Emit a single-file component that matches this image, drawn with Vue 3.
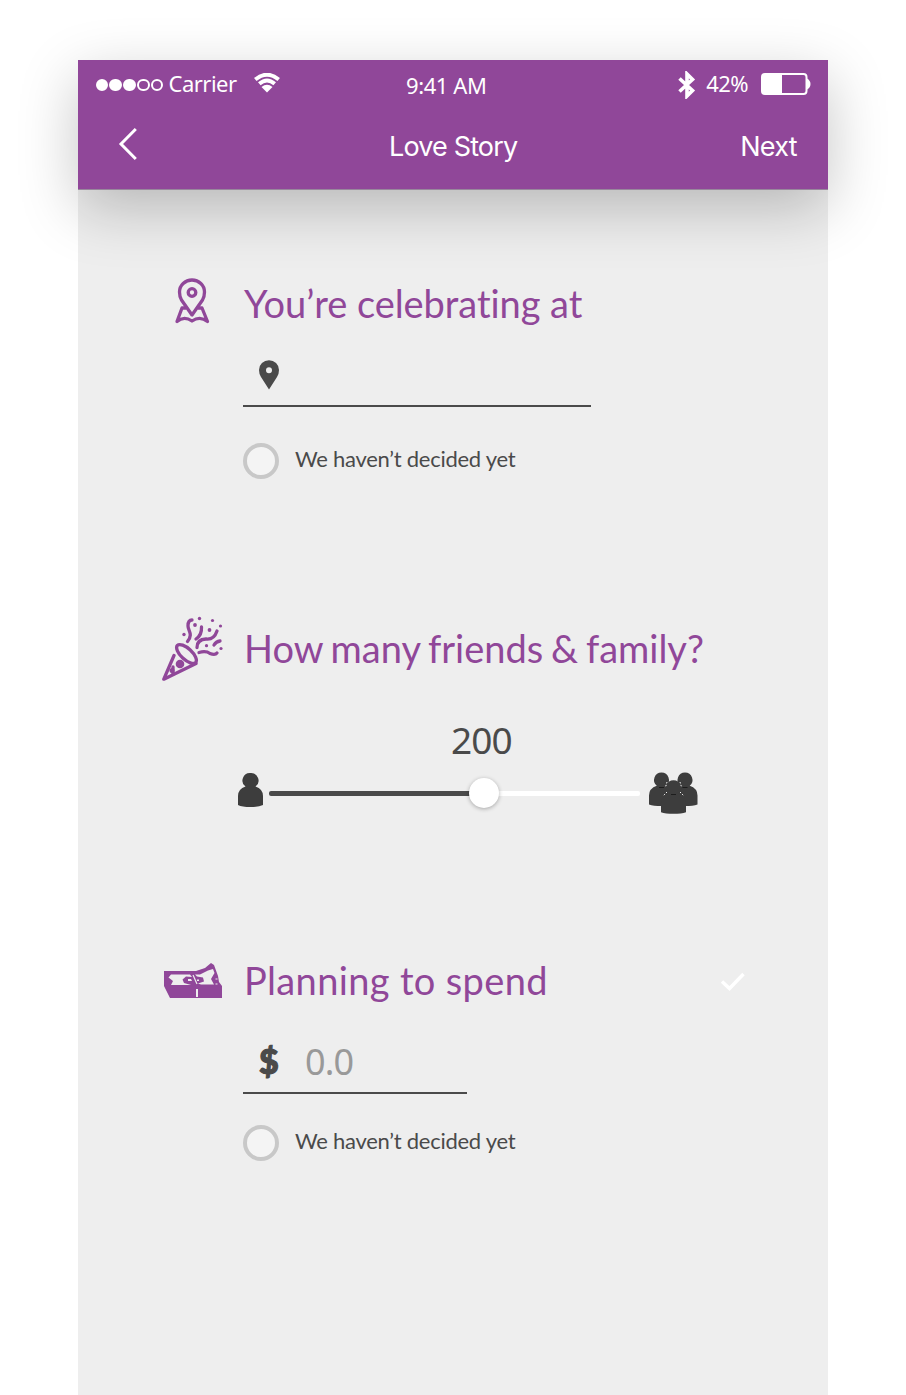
<script setup>
import { ref } from 'vue'

const guests = ref(200)
const progress = ref(58)
const signal = [true, true, true, false, false]
</script>

<template>
  <main class="phone">
    <header class="top">
      <div class="status">
        <div class="side left">
          <span class="dots"><i v-for="(on, n) in signal" :key="n" :class="{ on }"></i></span>
          <span class="carrier">Carrier</span>
          <svg class="wifi" width="26" height="20" viewBox="0 0 26 20">
            <path d="M1.300 6.500Q13-3 24.700 6.500M5.300 10.800Q13 4.300 20.700 10.800" fill="none" stroke="#fff" stroke-width="4" />
            <path d="M7.500 14Q13 9.500 18.500 14L13 19.500Z" fill="#fff" />
          </svg>
        </div>
        <span class="clock">9:41 AM</span>
        <div class="side right">
          <svg class="bluetooth" width="18" height="28" viewBox="0 0 18 28">
            <path d="M1.500 7.500L14.500 19.500 9 25V3L14.500 8.500 1.500 20.500" fill="none" stroke="#fff" stroke-width="3.600" />
          </svg>
          <span class="percent">42%</span>
          <svg class="battery" width="50" height="22" viewBox="0 0 50 22">
            <rect x="1" y="1" width="44.500" height="20" rx="3" fill="none" stroke="#fff" stroke-width="2" />
            <path d="M1 2h20v18H1zM46 5.500q3.500 2 3.500 5.500t-3.500 5.500z" fill="#fff" />
          </svg>
        </div>
      </div>
      <nav class="nav">
        <svg class="back" width="20" height="34" viewBox="0 0 20 34">
          <path d="M17.800 2L3 17 17.800 32" fill="none" stroke="#fff" stroke-width="3" />
        </svg>
        <h1>Love Story</h1>
        <span class="next">Next</span>
      </nav>
    </header>

    <section class="venue">
      <div class="heading">
        <svg class="icon" width="62" height="68" viewBox="162 270 62 68">
          <g fill="none" stroke="#904799" stroke-width="3.300" stroke-linejoin="round">
            <path d="M192 315L181.500 300Q179.500 296.500 179.500 292A12.500 12 0 0 1 204.500 292Q204.500 296.500 202.500 300Z" />
            <circle cx="192" cy="292.500" r="3.800" />
            <path d="M186 308H182L177 321.500Q184 315.500 192 321Q200 315.500 207.500 321.500L202 308H198" />
          </g>
        </svg>
        <h2 class="t1">You’re celebrating at</h2>
      </div>
      <div class="field wide">
        <svg width="20" height="30" viewBox="0 0 20 30">
          <path fill-rule="evenodd" fill="#4a4a4a" d="M10 29.500L2 17Q0 14 0 10A10 9.800 0 0 1 20 10Q20 14 18 17ZM10 7.200a3 3 0 1 0 0 6a3 3 0 0 0 0-6" />
        </svg>
      </div>
      <label class="choice"><i class="radio"></i><span>We haven’t decided yet</span></label>
    </section>

    <section class="people">
      <div class="heading">
        <svg class="icon" width="62" height="68" viewBox="162 615 62 68">
          <g fill="none" stroke="#904799" stroke-width="3.300" stroke-linecap="round">
            <path d="M174 655.500L163.800 679.200 196 663.500" stroke-linejoin="round" />
            <ellipse cx="186.500" cy="654" rx="12.500" ry="5.500" transform="rotate(43 186.500 654)" />
            <path d="M173 667v7M187.500 641.500C193.500 634 188 631 188 626q0-6 4-6M196 639q6-4 5.500-12M197 647.500q0-8 9-8.500 8 1 11-8M199 652.500q7-2 11 1 5 2 7-.5M214 645q2-3.500 6-4" />
          </g>
          <g fill="#904799">
            <circle cx="180" cy="664" r="4.300" /><circle cx="172" cy="670.500" r="2.500" />
            <circle cx="199.500" cy="618.500" r="1.700" /><circle cx="195" cy="625" r="1.900" />
            <circle cx="184" cy="634.500" r="1.700" /><circle cx="212.500" cy="620.500" r="1.600" />
            <circle cx="209.500" cy="630" r="1.900" /><circle cx="220.500" cy="626" r="1.600" />
            <circle cx="206.500" cy="645.700" r="1.600" /><circle cx="221" cy="648.500" r="1.600" />
          </g>
        </svg>
        <h2 class="t2">How many friends &amp; family?</h2>
      </div>
      <div class="count">{{ guests }}</div>
      <div class="slider">
        <svg width="26" height="46" viewBox="237 770 26 46">
          <path fill="#3d3d3d" d="M250.500 773a7.500 7.500 0 0 1 5 13.500Q263 789 263 796v9q-4 2-12.500 2T238 805v-9q0-7 7.500-9.500a7.500 7.500 0 0 1 5-13.500" />
        </svg>
        <div class="track">
          <div class="fill" :style="{ width: progress + '%' }"></div>
          <div class="thumb" :style="{ left: progress + '%' }"></div>
        </div>
        <svg width="50" height="46" viewBox="649 770 50 46">
          <defs>
            <path id="person" d="M0-21a7.500 7.500 0 0 1 4.700 13.300Q12.500-5 12.500 2v9Q8 12.500 0 12.500T-12.500 11V2q0-7 7.800-9.700A7.500 7.500 0 0 1 0-21" />
          </defs>
          <g fill="#3d3d3d">
            <use href="#person" x="661.500" y="793.500" />
            <use href="#person" x="685" y="793.500" />
            <use href="#person" x="673.500" y="801.300" />
          </g>
          <path d="M667 782l-1.500 5M680 782l1.500 5M667 792l-4 4M680 792l4 4" stroke="#eee" stroke-dasharray="1.500 1.500" />
          <path d="M659 787.500h5M682.500 787.500h5M671 794.500h5" stroke="#1d1d1d" />
        </svg>
      </div>
    </section>

    <section class="budget">
      <div class="heading">
        <svg class="icon" width="62" height="68" viewBox="162 947 62 68">
          <path fill="#904799" d="M164 971H196L205 968 211 963 214 965 218 976 219 982 222 986V998H170L164 986Z" />
          <path fill="#eee" d="M171 974.500H190L192 977 186 976.500 182.500 979.500 184 983 191 985H171L173 981 168.500 977.500ZM195 974.500H200L208 970.500 213 969 214.500 973 211 979 214 984.500H201L198 983.500 204 981.500 203 977.500 197 976.500Z" />
          <path fill="#eee" d="M188 979h3l1 2h-4zM197 979.500h2v1.500h-2zM196 989h2v8h-2z" />
          <path d="M193 975l4 9" stroke="#eee" stroke-width="1.200" />
          <path d="M215.500 979h2M215.500 984h2" stroke="#eee" />
        </svg>
        <h2 class="t3">Planning to spend</h2>
        <svg class="check" width="26" height="20" viewBox="0 0 26 20">
          <path d="M2 10.500L9.500 17.500 23.500 3" fill="none" stroke="#fff" stroke-width="3.400" />
        </svg>
      </div>
      <div class="field narrow">
        <b>$</b><span class="amount">0.0</span>
      </div>
      <label class="choice"><i class="radio"></i><span>We haven’t decided yet</span></label>
    </section>
  </main>
</template>

<style>
body { margin: 0; background: #fff; overflow: hidden; }
</style>

<style scoped>
.phone {
  box-sizing: border-box;
  width: 750px;
  height: 1335px;
  margin: 60px 0 0 78px;
  background: #eee;
  color: #4a4a4a;
  font-family: "Noto Sans", sans-serif;
  font-variant-ligatures: none;
}
.top {
  box-sizing: border-box;
  height: 130px;
  background: #904799;
  border-bottom: 1px solid #98879c;
  box-shadow: 0 18px 60px rgba(0, 0, 0, .23);
  color: #fff;
}
.status { display: grid; grid-template-columns: 311px auto 1fr; height: 50px; align-items: center; padding: 0 17px 0 17px; }
.side { display: flex; align-items: center; height: 50px; }
.right { justify-content: flex-end; }
.dots { display: flex; gap: 1px; margin-left: .5px; }
.dots i { box-sizing: border-box; width: 12.800px; height: 12.800px; border: 2px solid #fff; border-radius: 50%; }
.dots i.on { background: #fff; }
.carrier { margin: -4px 0 0 5px; font-size: 22px; letter-spacing: -.5px; }
.wifi { margin: -4px 0 0 17px; }
.clock { font-size: 22px; letter-spacing: -.4px; }
.bluetooth { margin-top: -1px; }
.percent { margin: -4px 0 0 10px; font-size: 22px; letter-spacing: -.6px; }
.battery { margin: -2px 0 0 13px; }
.nav { display: grid; grid-template-columns: 271px auto 1fr; align-items: center; height: 70px; padding: 0 31px 0 40px; font-family: Inter, sans-serif; font-size: 27px; }
.back { margin: -2px 0 0 0; }
h1 { margin: 2px 0 0; font-size: 27px; font-weight: 400; letter-spacing: -.85px; }
.next { justify-self: end; margin-top: 2px; letter-spacing: -.7px; }
section { box-sizing: border-box; padding-left: 84px; }
.venue { padding-top: 80px; height: 425px; }
.people { height: 332px; }
.heading { display: flex; align-items: center; height: 68px; }
h2 { margin: -3px 0 0 20px; color: #904799; font-family: Lato, sans-serif; font-size: 38px; font-weight: 400; line-height: 68px; white-space: nowrap; }
.t1 { letter-spacing: -.05px; }
.t2 { word-spacing: -1.900px; }
.t3 { letter-spacing: .35px; }
.check { margin-left: 172px; }
.field { box-sizing: border-box; display: flex; align-items: center; height: 59px; margin: 10px 0 0 81px; padding: 0 16px 4px; border-bottom: 2px solid #4a4a4a; }
.wide { width: 348px; }
.narrow { width: 224px; margin-top: 20px; padding-bottom: 2px; }
.field b { width: 20px; margin-top: -3px; font-family: Lato, sans-serif; font-size: 34px; font-weight: 900; line-height: 56px; -webkit-text-stroke: 1.200px #4a4a4a; }
.amount { margin: -2px 0 0 26px; color: #999; font-size: 36px; letter-spacing: -.9px; }
.choice { display: flex; align-items: center; height: 36px; margin: 36px 0 0 81px; font-family: Lato, sans-serif; font-size: 22px; letter-spacing: -.26px; }
.budget .choice { margin-top: 31px; }
.choice span { margin: -5px 0 0 16px; }
.radio { box-sizing: border-box; width: 36px; height: 36px; border: 4px solid #c8c8c8; border-radius: 50%; background: #f4f4f4; }
.count { margin: 30px 0 0 289px; height: 54px; line-height: 54px; font-size: 37px; letter-spacing: -.9px; }
.slider { display: flex; align-items: center; height: 46px; margin: 3px 0 0 75px; }
.track { position: relative; width: 371px; height: 5px; margin: 1px 9px 0 6px; border-radius: 2px; background: #fff; }
.fill { height: 5px; border-radius: 2px; background: #4a4a4a; }
.thumb { position: absolute; top: -13px; width: 30px; height: 30px; margin-left: -15px; border-radius: 50%; background: #fff; box-shadow: 0 1px 4px rgba(0, 0, 0, .3); }
</style>
